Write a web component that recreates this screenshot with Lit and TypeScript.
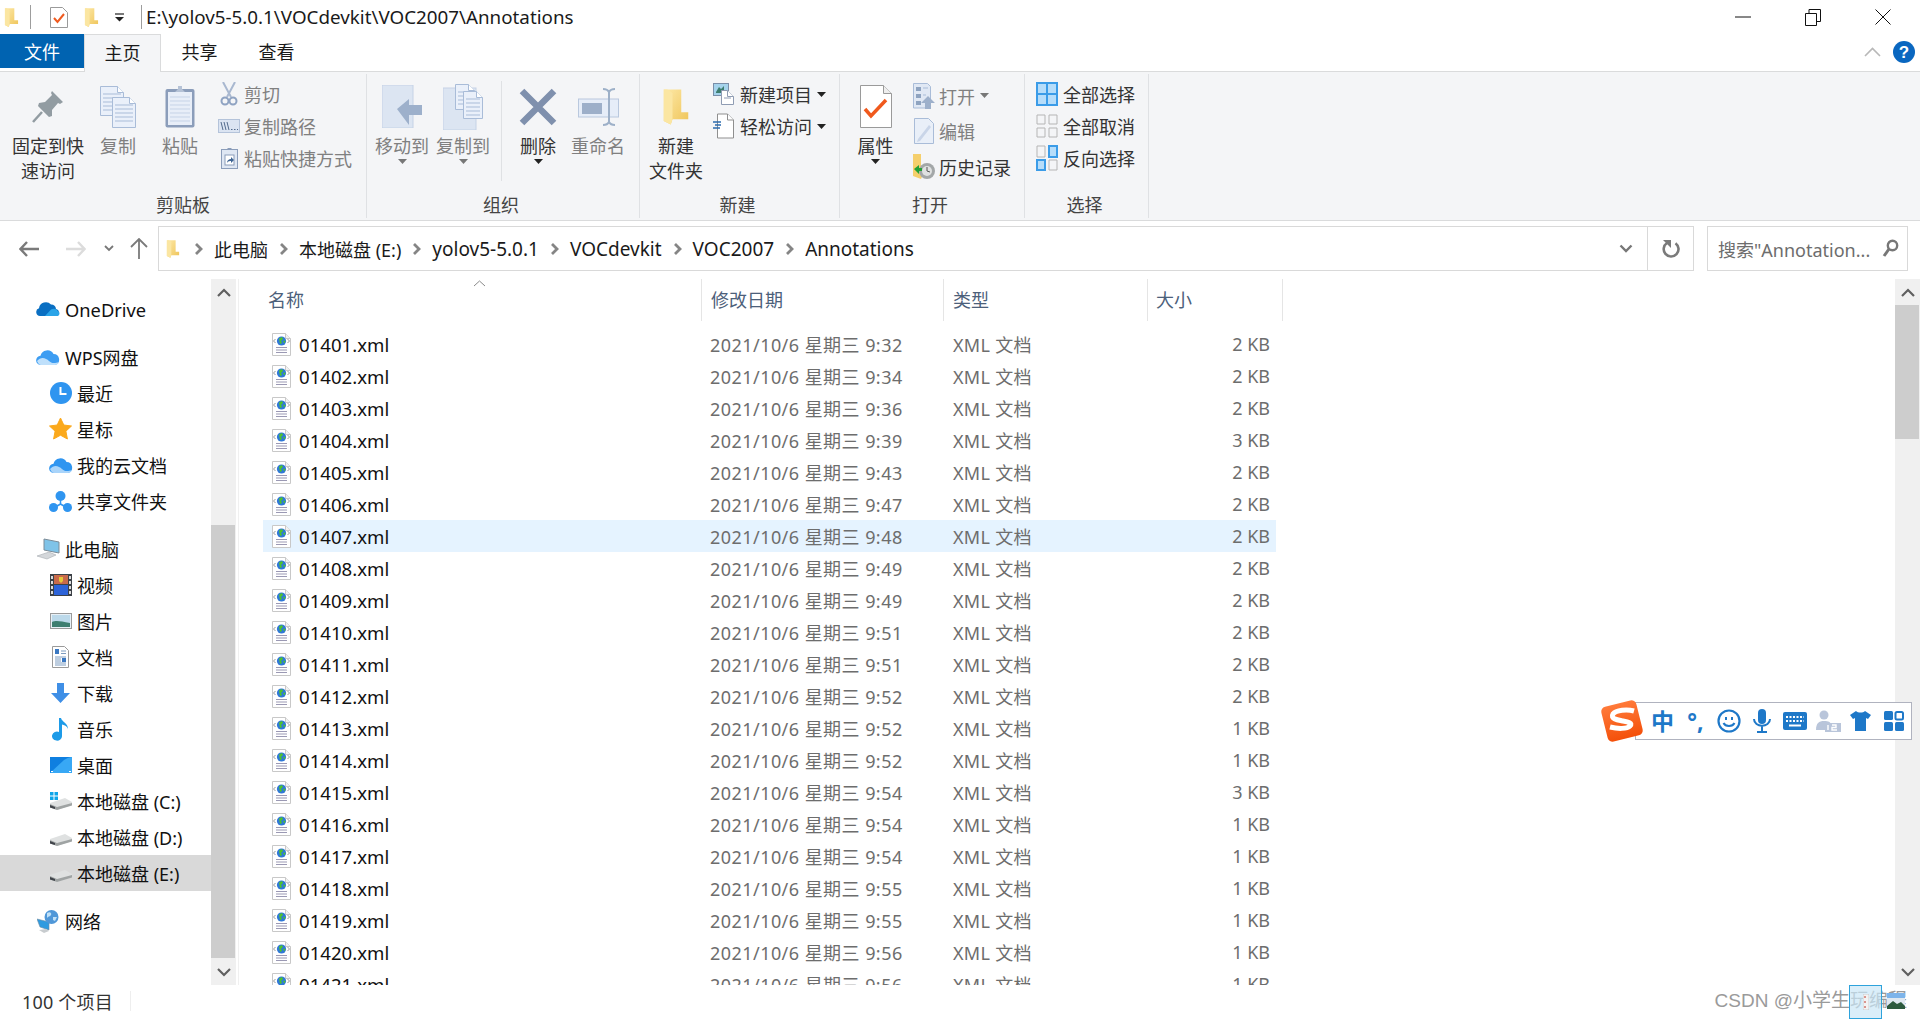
import { LitElement, html, css, svg } from 'lit';
import { customElement } from 'lit/decorators.js';

// small svg helpers
const page = (x: number, y: number, w: number, h: number, fill = '#eaf0fa', stroke = '#a9bcd8', lines = true) => {
    const rows = [];
    if (lines) {
        for (let ly = y + 8; ly < y + h - 3; ly += 4) {
            rows.push(svg`<line x1=${x + 3} x2=${x + w - 3} y1=${ly} y2=${ly} stroke=${stroke} stroke-width="1"/>`);
        }
    }
    return svg`<path d="M${x + .5} ${y + .5}h${w - 7}l6 6v${h - 7}h-${w - 1}z" fill=${fill} stroke=${stroke}/>
        <path d="M${x + w - 6.5} ${y + .5}v6h6" fill="#fff" stroke=${stroke}/>${rows}`;
};

const folder = (w: number, h: number) => html`
    <svg width=${w} height=${h} viewBox="0 0 16 22">
        <defs><linearGradient id="fg" x1="0" x2="1" y1="0" y2="1"><stop offset="0" stop-color="#fde9a8"/><stop offset="1" stop-color="#efc458"/></linearGradient></defs>
        <path d="M1 1h10v13h4v4H6l-1 3-4-2z" fill="url(#fg)"/>
        <path d="M1 1h2l3 2v15l-1 3-4-2z" fill="#fbe6a2"/>
    </svg>`;

const xmlIcon = html`
    <svg class="xml" width="19" height="23" viewBox="0 0 19 23">
        <path d="M.5.5h13l5 5v17H.5z" fill="#fff" stroke="#c8c8c8"/>
        <path d="M13.5.5v5h5" fill="#f1f1f1" stroke="#c8c8c8"/>
        <circle cx="9.5" cy="8" r="4.6" fill="#2f78d8"/>
        <path d="M7 5.500l3-1.500 1 2-2 2 1 2-2 1zM11 8l2.500-.5-1 3z" fill="#4fc22e"/>
        <path d="M3.5 6L1.5 8l2 2M15.500 6l2 2-2 2" fill="none" stroke="#9a9a9a"/>
        <path d="M4 14.5h11M4 17h11M4 19.5h11" stroke="#9b99b4"/>
    </svg>`;

const cloud = (c1: string, c2: string) => html`
    <svg width="24" height="18" viewBox="0 0 24 18">
        <path d="M5 17a4.6 4.6 0 0 1-.5-9.2A7 7 0 0 1 17.5 6 5.6 5.6 0 0 1 19 17z" fill=${c1}/>
        <path d="M1 13c4-5 9-3 12 0 2 2 5 3 10 1-1 2-2 3-4 3H5c-2 0-3-2-4-4z" fill=${c2}/>
    </svg>`;

const drive = (win = false) => html`
    <svg width="22" height="20" viewBox="0 0 22 20">
        ${win ? svg`<path d="M0 1h3.5v3.5H0zM4.5 1H8v3.5H4.5zM0 5.500h3.500V9H0zM4.500 5.500H8V9H4.500z" fill="#0ea5e9"/>` : ''}
        <path d="M0 12l15-5 7 4v3L7 19 0 16z" fill="#dfe1e1"/>
        <path d="M0 13l7 3 15-4v2.500L7 19 0 16.500z" fill="#9fa3a3"/>
        <path d="M0 14l5 2v2l-5-1.500z" fill="#40444a"/>
    </svg>`;

const navIcons: Record<string, unknown> = {
    onedrive: html`<svg width="24" height="16" viewBox="0 0 24 16"><path d="M4 15a4 4 0 0 1-1-7.800A7 7 0 0 1 15 3.500 5 5 0 0 1 20 8a3.700 3.700 0 0 1 1 7z" fill="#0a6fc2"/><path d="M9 15l6-6.500c2-1.500 6-1 6.500 1.500 2 .5 2.500 3 1.500 4-.5 .7-1 1-2 1z" fill="#2aa4e8"/></svg>`,
    wps: cloud('#3d9df2', '#bfe0fb'),
    recent: html`<svg width="22" height="22" viewBox="0 0 22 22"><circle cx="11" cy="11" r="11" fill="#2f95f0"/><path d="M10.500 5v7h6" fill="none" stroke="#fff" stroke-width="2"/></svg>`,
    star: html`<svg width="23" height="22" viewBox="0 0 23 22"><path d="M11.500 0l3.300 7 7.700 1-5.600 5.200L18.400 21l-6.900-3.800L4.600 21 6.100 13.200.5 8l7.700-1z" fill="#fba91c" stroke="#fba91c" stroke-linejoin="round"/></svg>`,
    cloud: cloud('#2f95f0', '#a9d4fa'),
    share: html`<svg width="23" height="21" viewBox="0 0 23 21"><circle cx="11.500" cy="5" r="5" fill="#2f95f0"/><circle cx="4.500" cy="16.500" r="4.500" fill="#2f95f0"/><circle cx="18.500" cy="16.500" r="4.500" fill="#2f95f0"/><path d="M11.500 8v5M11.500 13l-5 3M11.500 13l5 3" stroke="#2f95f0" stroke-width="1.500"/></svg>`,
    pc: html`<svg width="24" height="22" viewBox="0 0 24 22"><path d="M8 1l15 3v11L8 12z" fill="#7fc3e8" stroke="#7c8c98"/><path d="M1 18l12-4 7 3-9 4z" fill="#d4d7da" stroke="#a8adb2" stroke-width=".6"/></svg>`,
    video: html`<svg width="22" height="22" viewBox="0 0 22 22"><rect width="22" height="22" fill="#3c4147"/><rect x="4" y="1" width="14" height="9" fill="#c96a4a"/><rect x="4" y="11" width="14" height="10" fill="#2d63d8"/><path d="M9 3h4v4l-2 2-2-2z" fill="#e5c83a"/><path d="M1 2h2v3H1zM1 7h2v3H1zM1 12h2v3H1zM1 17h2v3H1zM19 2h2v3h-2zM19 7h2v3h-2zM19 12h2v3h-2zM19 17h2v3h-2z" fill="#dcdcdc"/></svg>`,
    image: html`<svg width="22" height="16" viewBox="0 0 22 16"><rect x=".5" y=".5" width="21" height="15" fill="#e8f0f6" stroke="#9a9a9a"/><rect x="2" y="2" width="18" height="12" fill="#bcd9ea"/><path d="M2 9c4-2 8-1 18 1v4H2z" fill="#3d7e70"/></svg>`,
    doc: html`<svg width="17" height="22" viewBox="0 0 17 22"><path d="M.5.5h12l4 4v17H.5z" fill="#fff" stroke="#9a9a9a"/><path d="M3 3h4v5H3z" fill="#3a78c2"/><path d="M9 5h5M9 7.500h5M3 11h11M3 13h6M3 15h6M3 17h11M3 19h11" stroke="#7d9cc0"/><rect x="10" y="12" width="4" height="4" fill="#3a78c2"/></svg>`,
    download: html`<svg width="19" height="20" viewBox="0 0 19 20"><path d="M6 0h7v10h6l-9.500 10L0 10h6z" fill="#3f8fe6"/></svg>`,
    music: html`<svg width="17" height="23" viewBox="0 0 17 23"><path d="M7 0h2c1 4 7 5 7 11-1-3-4-4-6-4.500V18a5 4.500 0 1 1-3-4z" fill="#1d9be8"/></svg>`,
    desktop: html`<svg width="22" height="16" viewBox="0 0 22 16"><rect width="22" height="16" fill="#0f7fe0"/><path d="M0 16L14 3c3-2 6-3 8-3v16z" fill="#38a8f5"/><path d="M1 14.500h2M19 14.500h2" stroke="#fff"/></svg>`,
    driveC: drive(true),
    drive: drive(),
    net: html`<svg width="22" height="23" viewBox="0 0 22 23"><path d="M0 9l12 3v8L3 17z" fill="#2f9be0" stroke="#6d8ba3" stroke-width=".6"/><path d="M2 20l7-1 3 2-5 2z" fill="#c8cccf"/><circle cx="14.500" cy="7" r="7" fill="#4f97d8"/><path d="M10 3c3-2 5 0 4 2s-3 1-4 3zM16 7l4 0-2 4-2-1z" fill="#bfe0f7"/></svg>`,
};

const nav = [
    { label: 'OneDrive', icon: 'onedrive', lvl: 1, gap: true },
    { label: 'WPS网盘', icon: 'wps', lvl: 1, gap: true },
    { label: '最近', icon: 'recent', lvl: 2 },
    { label: '星标', icon: 'star', lvl: 2 },
    { label: '我的云文档', icon: 'cloud', lvl: 2 },
    { label: '共享文件夹', icon: 'share', lvl: 2 },
    { label: '此电脑', icon: 'pc', lvl: 1, gap: true },
    { label: '视频', icon: 'video', lvl: 2 },
    { label: '图片', icon: 'image', lvl: 2 },
    { label: '文档', icon: 'doc', lvl: 2 },
    { label: '下载', icon: 'download', lvl: 2 },
    { label: '音乐', icon: 'music', lvl: 2 },
    { label: '桌面', icon: 'desktop', lvl: 2 },
    { label: '本地磁盘 (C:)', icon: 'driveC', lvl: 2 },
    { label: '本地磁盘 (D:)', icon: 'drive', lvl: 2 },
    { label: '本地磁盘 (E:)', icon: 'drive', lvl: 2, active: true },
    { label: '网络', icon: 'net', lvl: 1, gap: true },
];

// name suffix, time, size in KB
const files: [string, string, number][] = [
    ['01', '9:32', 2], ['02', '9:34', 2], ['03', '9:36', 2], ['04', '9:39', 3], ['05', '9:43', 2],
    ['06', '9:47', 2], ['07', '9:48', 2], ['08', '9:49', 2], ['09', '9:49', 2], ['10', '9:51', 2],
    ['11', '9:51', 2], ['12', '9:52', 2], ['13', '9:52', 1], ['14', '9:52', 1], ['15', '9:54', 3],
    ['16', '9:54', 1], ['17', '9:54', 1], ['18', '9:55', 1], ['19', '9:55', 1], ['20', '9:56', 1],
    ['21', '9:56', 1],
];

const arrow = (c = '#333') => html`<svg class="drop" width="9" height="5" viewBox="0 0 9 5"><path d="M0 0h9L4.500 5z" fill=${c}/></svg>`;

const icons = {
    pin: html`<svg width="32" height="33" viewBox="0 0 32 33"><path d="M20 1l11 11-3 2-2-1-6 7 0 6-3 1L6 16l1-3 6-1 7-7-1-2z" fill="#929ca2"/><path d="M10 22L1 32" stroke="#929ca2" stroke-width="2.500"/></svg>`,
    copy: html`<svg width="36" height="42" viewBox="0 0 36 42">${page(0, 0, 24, 30)}${page(12, 11, 24, 31)}</svg>`,
    paste: html`<svg width="30" height="43" viewBox="0 0 30 43"><rect x=".5" y="4" width="29" height="38.500" rx="2" fill="#8b9dba"/><rect x="3" y="7" width="24" height="33" fill="#e8eef8"/><path d="M5 12h20M5 16h20M5 20h20M5 24h20M5 28h20M5 32h20M5 36h20" stroke="#c6d3e7"/><path d="M10 7l3-3V1h4v3l3 3z" fill="#b5c2d6"/></svg>`,
    cut: html`<svg width="18" height="24" viewBox="0 0 18 24"><path d="M3 0l8 15M15 0L7 15" stroke="#a9b8d0" stroke-width="2" fill="none"/><circle cx="5" cy="19" r="3.500" fill="none" stroke="#8fa3c2" stroke-width="2"/><circle cx="13" cy="19" r="3.500" fill="none" stroke="#8fa3c2" stroke-width="2"/></svg>`,
    path: html`<svg width="22" height="14" viewBox="0 0 22 14"><rect x=".5" y=".5" width="21" height="13" fill="#dbe4f2" stroke="#b4c3da"/><path d="M3 3l2 8M6 3l2 8M9 3l2 8" stroke="#526a8c"/><path d="M13 10.500h1.500M16 10.500h1.500M19 10.500h1" stroke="#526a8c"/></svg>`,
    shortcut: html`<svg width="17" height="22" viewBox="0 0 17 22"><rect x=".5" y="2.500" width="16" height="19" fill="#dfe7f3" stroke="#8b9dba"/><path d="M5 3l2-2h3l2 2z" fill="#8b9dba"/><rect x="4" y="8" width="9" height="10" fill="#fff" stroke="#8b9dba"/><path d="M6 16c0-3 2-4 4-4V10l3 3-3 3v-2c-1 0-3 0-4 2z" fill="#3f6594"/></svg>`,
    move: html`<svg width="40" height="43" viewBox="0 0 40 43"><rect width="31" height="43" fill="#dce5f2" stroke="#c5d2e6"/><path d="M15 24L27 14v6h13v10H27v10z" fill="#9db0cb"/></svg>`,
    copyTo: html`<svg width="40" height="46" viewBox="0 0 40 46"><rect y="4" width="33" height="42" fill="#dce5f2" stroke="#c5d2e6"/>${page(12, 0, 20, 26)}${page(20, 7, 20, 28)}</svg>`,
    del: html`<svg width="38" height="38" viewBox="0 0 38 38"><path d="M3 3l32 32M35 3L3 35" stroke="#7f90ad" stroke-width="6.500"/></svg>`,
    rename: html`<svg width="41" height="38" viewBox="0 0 41 38"><rect x=".5" y="11" width="40" height="18" fill="#e6edf8" stroke="#b9c8de"/><rect x="4" y="15" width="20" height="11" fill="#9dafc9"/><path d="M25 1c3 0 5 1 6 3 1-2 3-3 6-3M25 37c3 0 5-1 6-3 1 2 3 3 6 3M31 4v30" fill="none" stroke="#9db0c8" stroke-width="2"/></svg>`,
    newItem: html`<svg width="22" height="22" viewBox="0 0 22 22"><rect x=".5" y=".5" width="15" height="12" fill="#a5d3ec" stroke="#7a8ea8"/><path d="M3 9l3-5 2 2 3-3v7H3z" fill="#3d7e70"/>${page(8, 7, 13, 15, '#fff', '#8f9cb3')}</svg>`,
    easy: html`<svg width="22" height="26" viewBox="0 0 22 26">${page(4, .5, 17, 25, '#fff', '#8f8f8f', false)}<path d="M0 9h8M2 12h6M0 15h7" stroke="#2d6cae" stroke-width="1.300"/></svg>`,
    prop: html`<svg width="32" height="43" viewBox="0 0 32 43"><path d="M.5.5h23l8 8v34H.5z" fill="#fff" stroke="#9a9a9a"/><path d="M23.500.5v8h8" fill="#eee" stroke="#9a9a9a"/><path d="M5 24l6 7L26 15" fill="none" stroke="#f0591d" stroke-width="3.500"/></svg>`,
    open: html`<svg width="22" height="26" viewBox="0 0 22 26"><path d="M.5.5h14l3 3V25H.5z" fill="#e0e8f4" stroke="#a9bcd8"/><path d="M3 4h5v4H3zM3 11h5v4H3zM3 18h5v4H3z" fill="#8ea3c0"/><path d="M10 5h5M10 12h3" stroke="#a9bcd8"/><path d="M15 13l7 7h-4v6h-6v-6H8z" fill="#9db0cb"/></svg>`,
    edit: html`<svg width="20" height="26" viewBox="0 0 20 26"><path d="M.5.5h14l5 5V25.500H.5z" fill="#e9eff8" stroke="#a9bcd8"/><path d="M4 21L15 7l2 2L6 23l-3 1z" fill="#c9d5e8"/></svg>`,
    history: html`<svg width="24" height="26" viewBox="0 0 24 26"><path d="M1 0h8v14h5l-5 11-8-3z" fill="#f5cf6c"/><circle cx="15" cy="17" r="8" fill="#a3a7a8"/><circle cx="15" cy="17" r="5" fill="#dfe1e1"/><path d="M15 13v4l3 1" stroke="#555" fill="none"/><path d="M2 15l5-4v3h3v3H7v3z" fill="#23a035"/></svg>`,
    selAll: html`<svg width="22" height="24" viewBox="0 0 22 24"><rect width="22" height="24" fill="#3b9ce8"/><path d="M2 2h8v9H2zM12 2h8v9h-8zM2 13h8v9H2zM12 13h8v9h-8z" fill="#b6ddfa"/></svg>`,
    selNone: html`<svg width="22" height="24" viewBox="0 0 22 24"><path d="M1 1h8v9H1zM13 1h8v9h-8zM1 14h8v9H1zM13 14h8v9h-8z" fill="#f4f5f7" stroke="#b5b5b5"/></svg>`,
    selInv: html`<svg width="22" height="26" viewBox="0 0 22 26"><path d="M1 1h8v11H1zM13 15h8v10h-8z" fill="#f4f5f7" stroke="#b5b5b5"/><path d="M12 0h10v13H12zM0 14h10v12H0z" fill="#3b9ce8"/><path d="M14 2h6v9h-6zM2 16h6v8H2z" fill="#b6ddfa"/></svg>`,
};

@customElement('app-root')
export class AppRoot extends LitElement {
    static styles = css`
        :host {
            display: block;
            width: 1920px;
            height: 1020px;
            position: relative;
            overflow: hidden;
            background: #fff;
            color: #1a1a1a;
            font-family: "Noto Sans", "Noto Sans CJK SC", sans-serif;
            font-size: 18px;
        }
        svg { display: block; flex: none; }
        .app { display: flex; flex-direction: column; height: 1020px; }

        .title { height: 34px; display: flex; align-items: center; flex: none; }
        .title .f1 { margin-left: 4px; }
        .title .sep { width: 1px; height: 24px; background: #9d9d9d; }
        .title .sep.a { margin: 0 19px 0 11px; }
        .title .f2 { margin-left: 16px; }
        .title .qa { margin-left: 16px; }
        .title .sep.b { margin: 0 4px 0 17px; }
        .title .path { font-size: 18.800px; line-height: 34px; white-space: nowrap; }
        .win { margin-left: auto; display: flex; padding-right: 2px; }
        .win span { width: 70px; display: flex; justify-content: center; align-items: center; }

        .tabs { height: 38px; display: flex; flex: none; position: relative; align-items: flex-start; }
        .tabs .t { height: 34px; line-height: 36px; text-align: center; font-size: 18px; }
        .tabs .file { width: 84px; background: #0063b1; color: #fff; }
        .tabs .home { width: 77px; height: 38px; background: #f4f5f7; border: 1px solid #dadbdc; border-bottom: none; box-sizing: border-box; position: relative; top: 0; }
        .tabs .plain { width: 77px; }
        .tabs .right { margin-left: auto; display: flex; align-items: center; gap: 12px; height: 36px; padding-right: 5px; }

        .ribbon { height: 150px; box-sizing: border-box; background: #f4f5f7; border-top: 1px solid #dadbdc; border-bottom: 1px solid #dadbdc; padding: 2px 0; display: flex; flex: none; margin-top: -1px; position: relative; }
        .ribbon .home-cover { position: absolute; left: 85px; top: -1px; width: 75px; height: 1px; background: #f4f5f7; }
        .group { display: flex; flex-direction: column; border-right: 1px solid #dfe1e4; box-sizing: border-box; flex: none; }
        .g1 { width: 367px; } .g2 { width: 273px; } .g3 { width: 200px; } .g4 { width: 185px; } .g5 { width: 124px; padding-left: 11px; }
        .body { flex: 1; display: flex; min-height: 0; }
        .glabel { height: 24px; line-height: 24px; text-align: center; color: #444; margin-bottom: 1px; }
        .g2 .glabel, .g3 .glabel, .g4 .glabel { padding-right: 4px; }
        .g5 .glabel { margin-left: -11px; padding-right: 4px; }
        .big { display: flex; flex-direction: column; align-items: center; padding-top: 5px; flex: none; color: #333; }
        .big.off { color: #808080; }
        .big .slot { height: 55px; display: flex; align-items: center; justify-content: center; }
        .big .txt { line-height: 24.500px; text-align: center; white-space: nowrap; }
        .big .drop { margin-top: 0; }
        .stack { display: flex; flex-direction: column; padding-top: 4px; flex: none; }
        .row { height: 32px; display: flex; align-items: center; gap: 4px; white-space: nowrap; color: #333; }
        .row.off { color: #808080; }
        .row .ic { width: 22px; display: flex; justify-content: center; flex: none; }
        .g1 .stack { margin-left: -2px; }
        .g2 .vsep { width: 1px; height: 100px; background: #dfe1e4; margin: 7px 8px 0 12px; flex: none; }
        .g3 .stack { margin-left: 1px; }
        .g3 .row { gap: 5px; }
        .g4 .stack { margin-left: 3px; }
        .g4 .row { height: 35.500px; gap: 5px; }
        .g4 .ic { width: 20px; }
        .g5 .row { gap: 5px; }

        .addr { height: 58px; display: flex; flex: none; padding-top: 5px; box-sizing: border-box; }
        .nav-btns { width: 158px; position: relative; display: flex; align-items: center; height: 45px; flex: none; }
        .nav-btns svg:nth-child(1) { margin-left: 19px; }
        .nav-btns svg:nth-child(2) { margin-left: 27px; }
        .nav-btns svg:nth-child(3) { margin-left: 18px; }
        .nav-btns svg:nth-child(4) { margin-left: 16px; }
        .crumbs { width: 1536px; height: 45px; box-sizing: border-box; border: 1px solid #d9d9d9; display: flex; align-items: center; flex: none; padding-left: 7px; }
        .crumbs .trail { display: flex; align-items: center; gap: 10px; margin-left: 13px; font-size: 19px; white-space: nowrap; }
        .crumbs .trail .cjk { font-size: 18px; }
        .crumbs .end { margin-left: auto; display: flex; align-items: center; height: 100%; }
        .crumbs .refresh { width: 46px; height: 100%; border-left: 1px solid #d9d9d9; display: flex; align-items: center; justify-content: center; margin-left: 14px; box-sizing: border-box; }
        .search { width: 201px; height: 45px; box-sizing: border-box; border: 1px solid #d9d9d9; margin-left: 13px; display: flex; align-items: center; padding: 0 8px 0 10px; justify-content: space-between; color: #6d6d6d; white-space: nowrap; flex: none; }

        .main { flex: 1; display: flex; min-height: 0; }
        .side { width: 211px; padding-top: 12px; box-sizing: border-box; flex: none; }
        .nav { height: 36px; display: flex; align-items: center; white-space: nowrap; color: #111; }
        .nav.gap { margin-top: 12px; }
        .nav.gap:first-child { margin-top: 0; }
        .nav .ic { display: flex; justify-content: center; flex: none; }
        .nav.l1 .ic { width: 24px; margin: 0 5px 0 36px; }
        .nav.l2 .ic { width: 23px; margin: 0 5px 0 49px; }
        .nav.l1 .latin { font-size: 18.300px; }
        .nav.active { background: #d9d9d9; }

        .bar { background: #f0f0f0; width: 25px; flex: none; display: flex; flex-direction: column; }
        .bar .btn { height: 26px; display: flex; align-items: center; justify-content: center; flex: none; }
        .bar .track { flex: 1; position: relative; }
        .bar .thumb { position: absolute; background: #cdcdcd; left: 0; right: 1px; }
        .bar.tree .thumb { top: 220px; bottom: 1px; }
        .bar.files .thumb { top: 0; height: 134px; }
        .splitter { width: 1px; margin: 0 2px; background: #f0f0f0; flex: none; }

        .list { flex: 1; min-width: 0; padding-left: 22px; overflow: hidden; position: relative; display: flex; flex-direction: column; }
        .head, .item { display: grid; grid-template-columns: 438px 243px 204px 128px; width: 1013px; }
        .head { height: 40px; width: 1020px; grid-template-columns: 438px 243px 204px 135px; color: #4c607a; line-height: 42px; flex: none; }
        .head span { border-right: 1px solid #e5e5e5; padding-left: 9px; box-sizing: border-box; }
        .head span:first-child { padding-left: 5px; border-right: none; }
        .head span:nth-child(2) { border-left: 1px solid #e5e5e5; }
        .head span:nth-child(4) { padding-left: 8px; }
        .head .sort { position: absolute; left: 232px; top: 1px; }
        .rows { margin-top: 9px; }
        .item { height: 32px; align-items: center; color: #6d6d6d; white-space: nowrap; }
        .item.sel { background: #e5f3ff; }
        .item > div { padding-left: 9px; }
        .item .name { display: flex; align-items: center; gap: 8px; color: #111; font-size: 18.600px; }
        .item .name span { padding-top: 1px; }
        .item .date { letter-spacing: .45px; }
        .item .kind { letter-spacing: .3px; }
        .item .size { text-align: right; padding: 0 6px 0 0; }
        .scroller { flex: 1; min-height: 0; overflow: hidden; }

        .status { height: 35px; display: flex; align-items: center; flex: none; color: #333; padding-bottom: 3px; box-sizing: border-box; }
        .status .count { padding-left: 22px; width: 108px; letter-spacing: .2px; }
        .status .sep { width: 1px; height: 20px; background: #eee; }

        .ime { position: absolute; left: 1635px; top: 702px; width: 277px; height: 38px; box-sizing: border-box; background: #fff; border: 1px solid #b0b3bf; display: flex; align-items: center; padding-left: 10px; color: #1e78c8; }
        .ime .k { width: 33px; display: flex; justify-content: center; align-items: center; flex: none; font-weight: 700; font-size: 23px; line-height: 1; }
        .ime .logo { position: absolute; left: -37px; top: -5px; }
        .mark { position: absolute; right: 13px; top: 988px; font-family: "Liberation Sans", "Noto Sans CJK SC", sans-serif; color: #9a9a9a; font-size: 19px; line-height: 26px; white-space: nowrap; }
        .preview { position: absolute; left: 1849px; top: 985px; width: 33px; height: 34px; box-sizing: border-box; background: #c9e7f6b0; border: 1px solid #2ea3dc; display: flex; align-items: center; justify-content: center; }
        .preview2 { position: absolute; left: 1887px; top: 993px; }
    `;

    big(icon: unknown, label: unknown, width: number, off = false, drop = false) {
        return html`
            <div class="big ${off ? 'off' : ''}" style="width:${width}px">
                <div class="slot">${icon}</div>
                <div class="txt">${label}</div>
                ${drop ? arrow(off ? '#777' : '#222') : ''}
            </div>`;
    }

    small(icon: unknown, label: string, off = false, drop = false) {
        return html`
            <div class="row ${off ? 'off' : ''}">
                <span class="ic">${icon}</span>
                <span>${label}</span>
                ${drop ? arrow(off ? '#777' : '#222') : ''}
            </div>`;
    }

    renderRibbon() {
        return html`
            <div class="ribbon">
                <div class="home-cover"></div>
                <div class="group g1">
                    <div class="body">
                        ${this.big(icons.pin, html`固定到快<br>速访问`, 96)}
                        ${this.big(icons.copy, '复制', 44, true)}
                        ${this.big(icons.paste, '粘贴', 80, true)}
                        <div class="stack">
                            ${this.small(icons.cut, '剪切', true)}
                            ${this.small(icons.path, '复制路径', true)}
                            ${this.small(icons.shortcut, '粘贴快捷方式', true)}
                        </div>
                    </div>
                    <div class="glabel">剪贴板</div>
                </div>
                <div class="group g2">
                    <div class="body">
                        ${this.big(icons.move, '移动到', 70, true, true)}
                        ${this.big(icons.copyTo, '复制到', 52, true, true)}
                        <div class="vsep"></div>
                        ${this.big(icons.del, '删除', 56, false, true)}
                        ${this.big(icons.rename, '重命名', 64, true)}
                    </div>
                    <div class="glabel">组织</div>
                </div>
                <div class="group g3">
                    <div class="body">
                        ${this.big(folder(28, 40), html`新建<br>文件夹`, 72)}
                        <div class="stack">
                            ${this.small(icons.newItem, '新建项目', false, true)}
                            ${this.small(icons.easy, '轻松访问', false, true)}
                        </div>
                    </div>
                    <div class="glabel">新建</div>
                </div>
                <div class="group g4">
                    <div class="body">
                        ${this.big(icons.prop, '属性', 71, false, true)}
                        <div class="stack">
                            ${this.small(icons.open, '打开', true, true)}
                            ${this.small(icons.edit, '编辑', true)}
                            ${this.small(icons.history, '历史记录')}
                        </div>
                    </div>
                    <div class="glabel">打开</div>
                </div>
                <div class="group g5">
                    <div class="body">
                        <div class="stack">
                            ${this.small(icons.selAll, '全部选择')}
                            ${this.small(icons.selNone, '全部取消')}
                            ${this.small(icons.selInv, '反向选择')}
                        </div>
                    </div>
                    <div class="glabel">选择</div>
                </div>
            </div>`;
    }

    renderAddress() {
        const chev = html`<svg width="11" height="14" viewBox="0 0 11 14"><path d="M3 2l5 5-5 5" fill="none" stroke="#858585" stroke-width="2.800"/></svg>`;
        const crumbs = ['此电脑', '本地磁盘 (E:)', 'yolov5-5.0.1', 'VOCdevkit', 'VOC2007', 'Annotations'];
        return html`
            <div class="addr">
                <div class="nav-btns">
                    <svg width="20" height="16" viewBox="0 0 20 16"><path d="M8 1L1.500 8 8 15M2 8h18" fill="none" stroke="#7a7a7a" stroke-width="2.400"/></svg>
                    <svg width="20" height="16" viewBox="0 0 20 16"><path d="M12 1l6.500 7L12 15M18 8H0" fill="none" stroke="#dcdcdc" stroke-width="2.400"/></svg>
                    <svg width="10" height="7" viewBox="0 0 10 7"><path d="M1 1l4 4 4-4" fill="none" stroke="#777" stroke-width="1.800"/></svg>
                    <svg width="18" height="21" viewBox="0 0 18 21"><path d="M1 9l8-8 8 8M9 1v20" fill="none" stroke="#7a7a7a" stroke-width="1.800"/></svg>
                </div>
                <div class="crumbs">
                    ${folder(14, 20)}
                    <div class="trail">
                        ${crumbs.map((c) => html`${chev}<span class=${/[\u4e00-\u9fff]/.test(c) ? 'cjk' : ''}>${c}</span>`)}
                    </div>
                    <div class="end">
                        <svg width="14" height="9" viewBox="0 0 14 9"><path d="M1.500 1.500L7 7l5.500-5.500" fill="none" stroke="#777" stroke-width="2.400"/></svg>
                        <div class="refresh">
                            <svg width="18" height="20" viewBox="0 0 18 20"><path d="M13.500 4.200A7.400 7.400 0 1 1 5 4" fill="none" stroke="#7a7a7a" stroke-width="2.600"/><path d="M1 1h8v8z" fill="#7a7a7a"/></svg>
                        </div>
                    </div>
                </div>
                <div class="search">
                    <span>搜索"Annotation...</span>
                    <svg width="17" height="19" viewBox="0 0 17 19"><circle cx="10.500" cy="6.500" r="4.700" fill="none" stroke="#777" stroke-width="2.400"/><path d="M7 10l-5 7" stroke="#777" stroke-width="3"/></svg>
                </div>
            </div>`;
    }

    renderBar(kind: string) {
        const up = html`<svg width="14" height="9" viewBox="0 0 14 9"><path d="M1 8l6-6 6 6" fill="none" stroke="#606060" stroke-width="2.200"/></svg>`;
        const down = html`<svg width="14" height="9" viewBox="0 0 14 9"><path d="M1 1l6 6 6-6" fill="none" stroke="#606060" stroke-width="2.200"/></svg>`;
        return html`
            <div class="bar ${kind}">
                <div class="btn">${up}</div>
                <div class="track"><div class="thumb"></div></div>
                <div class="btn">${down}</div>
            </div>`;
    }

    render() {
        return html`
            <div class="app">
                <div class="title">
                    <span class="f1">${folder(15, 21)}</span>
                    <span class="sep a"></span>
                    <svg width="18" height="21" viewBox="0 0 18 21"><path d="M.5.5h12l5 5v15H.5z" fill="#fff" stroke="#9a9a9a"/><path d="M4 11l3.500 4L14 7" fill="none" stroke="#ef5a1f" stroke-width="2"/></svg>
                    <span class="f2">${folder(15, 21)}</span>
                    <svg class="qa" width="9" height="9" viewBox="0 0 9 9"><path d="M0 1h9" stroke="#222" stroke-width="1.200"/><path d="M0 4h9L4.500 8.500z" fill="#222"/></svg>
                    <span class="sep b"></span>
                    <span class="path">E:\\yolov5-5.0.1\\VOCdevkit\\VOC2007\\Annotations</span>
                    <div class="win">
                        <span><svg width="16" height="2" viewBox="0 0 16 2"><path d="M0 1h16" stroke="#111"/></svg></span>
                        <span><svg width="16" height="17" viewBox="0 0 16 17"><path d="M.5 4.500h11v12H.5zM4 4.500V.5h11.500v12H11.500" fill="none" stroke="#111"/></svg></span>
                        <span><svg width="16" height="16" viewBox="0 0 16 16"><path d="M.5.5l15 15M15.500.5l-15 15" stroke="#111"/></svg></span>
                    </div>
                </div>
                <div class="tabs">
                    <div class="t file">文件</div>
                    <div class="t home">主页</div>
                    <div class="t plain">共享</div>
                    <div class="t plain">查看</div>
                    <div class="right">
                        <svg width="17" height="10" viewBox="0 0 17 10"><path d="M1 9l7.500-7.500L16 9" fill="none" stroke="#b8b8b8" stroke-width="1.600"/></svg>
                        <svg width="22" height="22" viewBox="0 0 22 22"><circle cx="11" cy="11" r="11" fill="#0a67c0"/><text x="11" y="17" text-anchor="middle" fill="#fff" font-size="17" font-weight="700" font-family="Liberation Sans">?</text></svg>
                    </div>
                </div>
                ${this.renderRibbon()}
                ${this.renderAddress()}
                <div class="main">
                    <div class="side">
                        ${nav.map((n) => html`
                            <div class="nav l${n.lvl} ${n.gap ? 'gap' : ''} ${n.active ? 'active' : ''}">
                                <span class="ic">${navIcons[n.icon]}</span>
                                <span class=${n.label === 'OneDrive' ? 'latin' : ''}>${n.label}</span>
                            </div>`)}
                    </div>
                    ${this.renderBar('tree')}
                    <div class="splitter"></div>
                    <div class="list">
                        <div class="head">
                            <span>名称</span><span>修改日期</span><span>类型</span><span>大小</span>
                            <svg class="sort" width="13" height="7" viewBox="0 0 13 7"><path d="M1 6l5.500-5L12 6" fill="none" stroke="#8a8a8a"/></svg>
                        </div>
                        <div class="scroller">
                            <div class="rows">
                                ${files.map(([n, t, s]) => html`
                                    <div class="item ${n === '07' ? 'sel' : ''}">
                                        <div class="name">${xmlIcon}<span>014${n}.xml</span></div>
                                        <div class="date">2021/10/6 星期三 ${t}</div>
                                        <div class="kind">XML 文档</div>
                                        <div class="size">${s} KB</div>
                                    </div>`)}
                            </div>
                        </div>
                    </div>
                    ${this.renderBar('files')}
                </div>
                <div class="status">
                    <span class="count">100 个项目</span>
                    <span class="sep"></span>
                </div>
            </div>

            <div class="ime">
                <svg class="logo" width="46" height="46" viewBox="0 0 46 46">
                    <defs><linearGradient id="sg" x1="0" x2="0" y1="0" y2="1"><stop offset="0" stop-color="#ff7a3a"/><stop offset="1" stop-color="#f4500a"/></linearGradient></defs>
                    <rect x="5" y="5" width="36" height="36" rx="5" fill="url(#sg)" transform="rotate(-14 23 23)"/>
                    <path d="M35 13c-7-2-18-1-21 3-3 5 5 6 10 7 5 1 10 2 7 5-3 3-12 3-20 1" fill="none" stroke="#fff" stroke-width="5"/>
                </svg>
                <span class="k">中</span>
                <span class="k">°,</span>
                <span class="k"><svg width="24" height="24" viewBox="0 0 24 24"><circle cx="12" cy="12" r="10.500" fill="none" stroke="#1e78c8" stroke-width="2.200"/><path d="M9 8v3M15 8v3" stroke="#1e78c8" stroke-width="2"/><path d="M6.500 14c2 4 9 4 11 0" fill="none" stroke="#1e78c8" stroke-width="2"/></svg></span>
                <span class="k"><svg width="18" height="24" viewBox="0 0 18 24"><rect x="5" width="8" height="15" rx="4" fill="#1e78c8"/><path d="M1 10c0 9 16 9 16 0M9 17v5M4 23h10" fill="none" stroke="#1e78c8" stroke-width="2"/></svg></span>
                <span class="k"><svg width="24" height="18" viewBox="0 0 24 18"><rect width="24" height="18" rx="2" fill="#1e78c8"/><path d="M3 5h18M3 9h18" stroke="#fff" stroke-width="2" stroke-dasharray="2 1.500"/><path d="M6 13.500h12" stroke="#fff" stroke-width="2"/></svg></span>
                <span class="k"><svg width="26" height="22" viewBox="0 0 26 22"><circle cx="9" cy="5" r="4.500" fill="#b9c5da"/><path d="M1 20c0-7 3-9 8-9s6 1 7 3v6z" fill="#b9c5da"/><rect x="10" y="13" width="16" height="9" fill="#b9c5da"/><path d="M13 15v5M17 15h4v2.500h-4V20h5" stroke="#fff" fill="none" stroke-width="1.400"/></svg></span>
                <span class="k"><svg width="21" height="20" viewBox="0 0 21 20"><path d="M6 0c2 2 7 2 9 0l6 4-3 4-2-1v13H5V7L3 8 0 4z" fill="#1e78c8"/></svg></span>
                <span class="k"><svg width="20" height="20" viewBox="0 0 20 20"><rect width="9" height="9" rx="1.500" fill="#1e78c8"/><rect x="11.500" y="1" width="7.500" height="7.500" rx="1.500" fill="#fff" stroke="#1e78c8" stroke-width="2"/><rect y="11" width="9" height="9" rx="1.500" fill="#1e78c8"/><rect x="11" y="11" width="9" height="9" rx="1.500" fill="#1e78c8"/></svg></span>
            </div>
            <div class="mark">CSDN @小学生玩编程</div>
            <div class="preview">
                <svg width="6" height="16" viewBox="0 0 6 16"><rect width="6" height="16" fill="#f3f3f3" stroke="#b8b8b8" stroke-width=".6"/><path d="M2 2v2M2 7v2M2 12v2" stroke="#c0392b"/></svg>
            </div>
            <svg class="preview2" width="18" height="16" viewBox="0 0 18 16"><rect width="18" height="5" fill="#7db4ea"/><rect y="5" width="18" height="11" fill="#dfe8f0"/><path d="M0 13l6-5 4 3 4-2 4 4v3H0z" fill="#2d5a3e"/></svg>
        `;
    }
}
